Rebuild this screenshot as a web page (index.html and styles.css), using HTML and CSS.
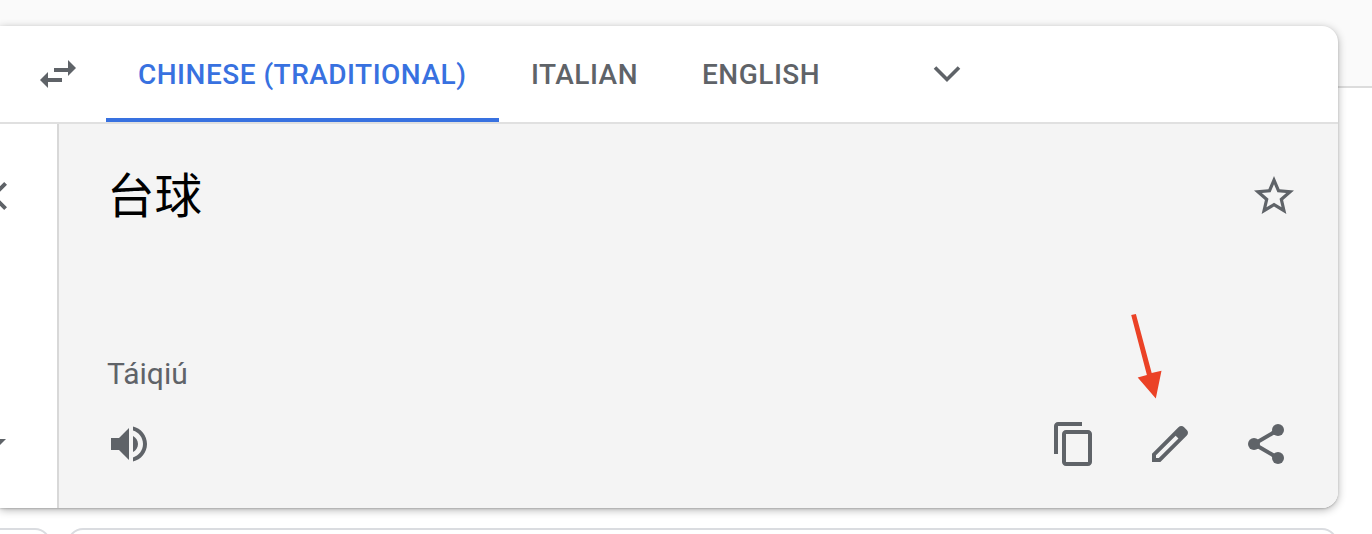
FILE: index.html
```html
<!DOCTYPE html>
<html lang="en">
<head>
<meta charset="utf-8">
<title>Translate</title>
<link rel="stylesheet" href="styles.css">
</head>
<body>
<div class="page">
  <div class="backdrop"></div>
  <main class="content">
    <section class="card">
      <header class="languages">
        <svg class="icon swap" viewBox="0 0 24 24"><path d="M10 9h7V5l4 4-4 4v-2h-7zM14 14v2H7v3l-4-4 4-4v3z"/></svg>
        <nav class="tabs">
          <span class="tab tab-active">CHINESE (TRADITIONAL)</span>
          <span class="tab">ITALIAN</span>
          <span class="tab">ENGLISH</span>
        </nav>
        <svg class="chevron" viewBox="0 0 28 18"><path d="M2 2.5l12 12 12-12"/></svg>
      </header>
      <div class="panes">
        <div class="source">
          <svg class="icon" viewBox="0 0 24 24"><path d="M19 6.41L17.59 5 12 10.59 6.41 5 5 6.41 10.59 12 5 17.59 6.41 19 12 13.41 17.59 19 19 17.59 13.41 12z"/></svg>
          <svg class="icon drop" viewBox="0 0 24 24"><path d="M7 10l5 5 5-5z"/></svg>
        </div>
        <div class="result">
          <div class="result-top">
            <div class="translation" lang="zh">台球</div>
            <svg class="icon star" viewBox="0 0 24 24"><path d="M22 9.24l-7.19-.62L12 2 9.19 8.63 2 9.24l5.46 4.73L5.82 21 12 17.27 18.18 21l-1.63-7.03L22 9.24zM12 15.4l-3.76 2.27 1-4.28-3.32-2.88 4.38-.38L12 6.1l1.71 4.04 4.38.38-3.32 2.88 1 4.28L12 15.4z"/></svg>
          </div>
          <div class="pinyin">Táiqiú</div>
          <div class="actions">
            <svg class="icon" viewBox="0 0 24 24"><path d="M3 9v6h4l5 5V4L7 9H3zm13.500 3c0-1.770-1.020-3.290-2.500-4.030v8.050c1.480-.73 2.500-2.250 2.500-4.020zM14 3.230v2.060c2.890.86 5 3.540 5 6.710s-2.110 5.850-5 6.710v2.060c4.010-.91 7-4.490 7-8.770s-2.990-7.860-7-8.770z"/></svg>
            <div class="tools">
              <svg class="icon" viewBox="0 0 24 24"><path d="M16 1H4c-1.100 0-2 .9-2 2v14h2V3h12V1zm3 4H8c-1.100 0-2 .9-2 2v14c0 1.100.9 2 2 2h11c1.100 0 2-.9 2-2V7c0-1.100-.9-2-2-2zm0 16H8V7h11v14z"/></svg>
              <svg class="icon" viewBox="0 0 24 24"><path d="M20.410 4.940l-1.350-1.350c-.78-.78-2.050-.78-2.830 0L3 16.820V21h4.180L20.410 7.770c.79-.78.79-2.050 0-2.830zM6.410 19.060L5 19v-1.360l9.820-9.820 1.410 1.410z"/></svg>
              <svg class="icon" viewBox="0 0 24 24"><path d="M6 12L18 5M6 12l12 7" stroke="currentColor" stroke-width="2"/><circle cx="18" cy="5" r="3"/><circle cx="6" cy="12" r="3"/><circle cx="18" cy="19" r="3"/></svg>
            </div>
          </div>
        </div>
      </div>
    </section>
    <div class="below">
      <div class="box box-left"></div>
      <div class="box box-right"></div>
    </div>
  </main>
  <svg class="pointer" viewBox="0 0 40 90"><path d="M1.200 6L5.900 4.900 21.700 63.900 31.500 61.800 25.800 89.500 7.700 68.600 16.900 65.900z"/></svg>
</div>
</body>
</html>
```

FILE: styles.css
```css
* { box-sizing: border-box; }
body { margin: 0; background: #fff; font-family: Roboto, Arial, sans-serif; color: #5f6368; }
.page { position: relative; height: 534px; overflow: hidden; }
.backdrop { position: absolute; inset: 0 0 auto 0; height: 88px; background: #fafafa; border-bottom: 2px solid #dcdcdc; }
.content { position: relative; padding-top: 26px; }
.card { width: 1338px; height: 482px; background: #fff; border-radius: 0 16px 16px 0; overflow: hidden; box-shadow: 0 2px 8px rgba(0,0,0,.3), 0 1px 2px rgba(0,0,0,.16); }
.icon { display: block; flex: none; width: 48px; height: 48px; fill: currentColor; }
.languages { display: flex; height: 98px; border-bottom: 2px solid #e0e0e0; }
.swap { margin: 24px 24px 0 34px; }
.tabs { display: flex; }
.tab { height: 96px; padding: 0 32px; font-size: 28px; font-weight: 500; line-height: 97px; letter-spacing: .49px; white-space: nowrap; }
.tab-active { width: 393px; color: #3871e0; border-bottom: 4px solid #3871e0; }
.chevron { width: 28px; height: 18px; margin: 39px 0 0 81px; fill: none; stroke: currentColor; stroke-width: 3.6; }
.panes { display: flex; height: 384px; }
.source { width: 59px; border-right: 2px solid #d8d8d8; padding-top: 48px; }
.source .icon { margin-left: -31px; }
.source .drop { margin: 199px 0 0 -28px; }
.result { flex: 1; background: #f4f4f4; padding: 37px 40px 0 48px; }
.result-top { display: flex; justify-content: space-between; height: 193px; }
.translation { font-family: "Noto Sans CJK SC", sans-serif; font-size: 47.5px; line-height: 64px; color: #000; }
.star { margin-top: 11px; }
.pinyin { font-size: 30px; line-height: 40px; }
.actions { display: flex; justify-content: space-between; margin: 26px 8px 0 -2px; }
.tools { display: flex; gap: 48px; }
.below { display: flex; gap: 16px; margin-top: 20px; }
.box { height: 60px; border: 2px solid #dadce0; border-radius: 16px; }
.box-left { width: 51px; border-left: 0; border-radius: 0 16px 0 0; }
.box-right { width: 1271px; }
.pointer { position: absolute; left: 1130px; top: 309px; width: 40px; height: 90px; fill: #eb4226; }
```
